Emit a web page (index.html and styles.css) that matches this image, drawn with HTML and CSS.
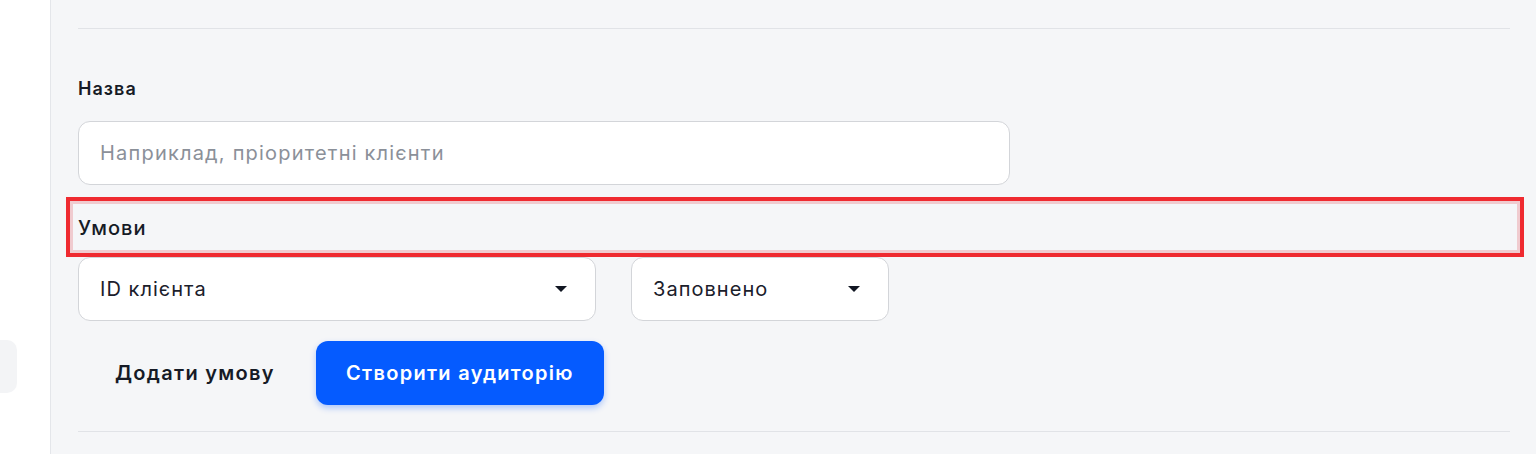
FILE: index.html
```html
<!DOCTYPE html>
<html lang="uk">
<head>
<meta charset="utf-8">
<title>Аудиторія</title>
<link rel="stylesheet" href="styles.css">
</head>
<body>
<div class="app">
  <aside class="sidebar">
    <div class="side-item"></div>
  </aside>
  <main class="main">
    <hr class="divider">
    <form class="form">
      <label class="label" for="name">Назва</label>
      <input id="name" class="input" type="text" placeholder="Наприклад, пріоритетні клієнти">
      <div class="section-label">Умови</div>
      <div class="conditions">
        <div class="select select-wide"><span>ID клієнта</span><span class="caret"></span></div>
        <div class="select select-narrow"><span>Заповнено</span><span class="caret"></span></div>
      </div>
      <div class="actions">
        <button type="button" class="btn btn-ghost">Додати умову</button>
        <button type="button" class="btn btn-primary">Створити аудиторію</button>
      </div>
    </form>
    <hr class="divider divider-bottom">
    <div class="highlight"></div>
  </main>
</div>
</body>
</html>
```

FILE: styles.css
```css
* { box-sizing: border-box; }
html, body { margin: 0; padding: 0; height: 100%; }
body {
  font-family: Inter, "Noto Sans", sans-serif;
  color: #161b26;
  background: #f5f6f8;
  overflow: hidden;
  letter-spacing: 0.065em;
}
.app {
  display: flex;
  height: 454px;
}
.sidebar {
  width: 51px;
  flex: none;
  background: #ffffff;
  border-right: 1px solid #e4e6ea;
  padding-top: 340px;
}
.side-item {
  width: 17px;
  height: 53px;
  background: #f3f4f6;
  border-radius: 0 10px 10px 0;
}
.main {
  flex: 1;
  position: relative;
  padding: 28px 26px 0 27px;
}
.divider {
  margin: 0;
  border: 0;
  height: 1px;
  background: #e1e3e7;
}
.form {
  display: flex;
  flex-direction: column;
  align-items: flex-start;
  padding-top: 48px;
}
.label {
  font-size: 18px;
  line-height: 24px;
  font-weight: 600;
  color: #161b26;
}
.input {
  margin-top: 20px;
  width: 932px;
  height: 64px;
  border: 1px solid #d3d5d9;
  border-radius: 12px;
  background: #ffffff;
  padding: 0 21px;
  font-family: inherit;
  font-size: 20px;
  letter-spacing: 0.06em;
  color: #161b26;
  outline: none;
}
.input::placeholder { color: #8b9099; }
.section-label {
  margin-top: 29px;
  font-size: 20px;
  line-height: 28px;
  font-weight: 500;
  color: #161b26;
}
.conditions {
  margin-top: 15px;
  display: flex;
  gap: 35px;
}
.select {
  height: 64px;
  border: 1px solid #d3d5d9;
  border-radius: 12px;
  background: #ffffff;
  display: flex;
  align-items: center;
  justify-content: space-between;
  padding: 0 28px 0 21px;
  font-size: 20px;
  color: #1b202b;
}
.select-wide { width: 518px; }
.select-narrow { width: 258px; }
.caret {
  width: 0;
  height: 0;
  border-left: 6px solid transparent;
  border-right: 6px solid transparent;
  border-top: 6px solid #111622;
}
.actions {
  margin-top: 20px;
  display: flex;
  gap: 5px;
}
.btn {
  height: 64px;
  border: 0;
  border-radius: 12px;
  font-family: inherit;
  font-size: 20px;
  font-weight: 600;
  letter-spacing: 0.065em;
  cursor: pointer;
}
.btn-ghost {
  background: transparent;
  color: #161b26;
  padding: 0 36px 0 37px;
}
.btn-primary {
  width: 288px;
  background: #055bff;
  color: #ffffff;
  box-shadow: 0 3px 6px rgba(5, 91, 255, 0.3);
}
.divider-bottom { margin-top: 26px; }
.highlight {
  position: absolute;
  left: 15px;
  top: 197px;
  width: 1458px;
  height: 60px;
  border: 4px solid #ef2a30;
  box-shadow: inset 0 0 0 3px rgba(236, 160, 166, 0.5);
  pointer-events: none;
}
```
